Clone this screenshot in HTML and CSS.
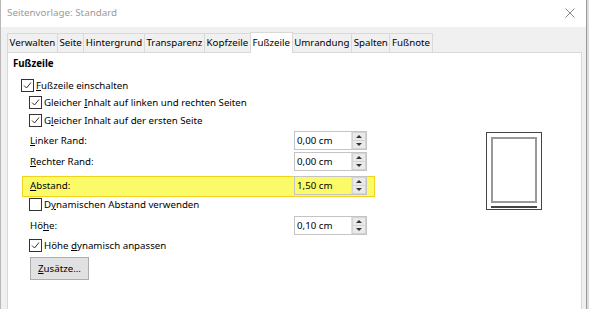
FILE: index.html
```html
<!DOCTYPE html>
<html lang="de">
<head>
<meta charset="utf-8">
<title>Seitenvorlage: Standard</title>
<link rel="stylesheet" href="styles.css">
</head>
<body>
<div class="window">
  <div class="titlebar">
    <span class="title">Seitenvorlage: Standard</span>
    <svg class="close" width="10" height="10" viewBox="0 0 10 10"><path d="M0.5 0.5 L9.5 9.5 M9.5 0.5 L0.5 9.5" stroke="#8a8a8a" stroke-width="1" fill="none"/></svg>
  </div>
  <div class="client">
    <div class="tabs">
      <div class="tab">Verwalten</div>
      <div class="tab">Seite</div>
      <div class="tab">Hintergrund</div>
      <div class="tab">Transparenz</div>
      <div class="tab">Kopfzeile</div>
      <div class="tab active">Fußzeile</div>
      <div class="tab">Umrandung</div>
      <div class="tab">Spalten</div>
      <div class="tab">Fußnote</div>
    </div>
    <div class="panel">
      <div class="form">
        <div class="heading">Fußzeile</div>
        <div class="row cb-row lvl1 first">
          <svg class="cb" width="13" height="13" viewBox="0 0 13 13"><rect x="0.5" y="0.5" width="12" height="12" fill="#fff" stroke="#333"/><path d="M3 6.5 L5.5 9 L10 3.5" stroke="#333" fill="none" stroke-width="1"/></svg>
          <span><u>F</u>ußzeile einschalten</span>
        </div>
        <div class="row cb-row lvl2 h17">
          <svg class="cb" width="13" height="13" viewBox="0 0 13 13"><rect x="0.5" y="0.5" width="12" height="12" fill="#fff" stroke="#333"/><path d="M3 6.5 L5.5 9 L10 3.5" stroke="#333" fill="none" stroke-width="1"/></svg>
          <span>Gleicher <u>I</u>nhalt auf linken und rechten Seiten</span>
        </div>
        <div class="row cb-row lvl2">
          <svg class="cb" width="13" height="13" viewBox="0 0 13 13"><rect x="0.5" y="0.5" width="12" height="12" fill="#fff" stroke="#333"/><path d="M3 6.5 L5.5 9 L10 3.5" stroke="#333" fill="none" stroke-width="1"/></svg>
          <span>G<u>l</u>eicher Inhalt auf der ersten Seite</span>
        </div>
        <div class="row field-row h22">
          <span class="label"><u>L</u>inker Rand:</span>
          <div class="spin"><span class="val">0,00 cm</span><div class="btns"><span class="up"></span><span class="down"></span></div></div>
        </div>
        <div class="row field-row h21">
          <span class="label"><u>R</u>echter Rand:</span>
          <div class="spin"><span class="val">0,00 cm</span><div class="btns"><span class="up"></span><span class="down"></span></div></div>
        </div>
        <div class="row field-row h22 highlight">
          <span class="label"><u>A</u>bstand:</span>
          <div class="spin"><span class="val">1,50 cm</span><div class="btns"><span class="up"></span><span class="down"></span></div></div>
        </div>
        <div class="row cb-row lvl2 h17">
          <svg class="cb" width="13" height="13" viewBox="0 0 13 13"><rect x="0.5" y="0.5" width="12" height="12" fill="#fff" stroke="#333"/></svg>
          <span>D<u>y</u>namischen Abstand verwenden</span>
        </div>
        <div class="row field-row h22 gap1">
          <span class="label">Hö<u>h</u>e:</span>
          <div class="spin"><span class="val">0,10 cm</span><div class="btns"><span class="up"></span><span class="down"></span></div></div>
        </div>
        <div class="row cb-row lvl2">
          <svg class="cb" width="13" height="13" viewBox="0 0 13 13"><rect x="0.5" y="0.5" width="12" height="12" fill="#fff" stroke="#333"/><path d="M3 6.5 L5.5 9 L10 3.5" stroke="#333" fill="none" stroke-width="1"/></svg>
          <span>Höhe <u>d</u>ynamisch anpassen</span>
        </div>
        <div class="btn-row"><button class="btn"><u>Z</u>usätze...</button></div>
      </div>
      <div class="preview">
        <div class="page">
          <div class="body-area"></div>
          <div class="footer-line"></div>
        </div>
      </div>
    </div>
  </div>
</div>
</body>
</html>
```

FILE: styles.css
```css
* { box-sizing: border-box; }
html, body { margin: 0; padding: 0; }
body {
  width: 589px;
  height: 309px;
  overflow: hidden;
  background: #dcdcdc;
  font-family: "Noto Sans", "Open Sans", sans-serif;
  font-size: 9.7px;
  color: #000;
}
.window {
  width: 587px;
  height: 309px;
  background: #f0f0f0;
  border-left: 1px solid #b8b8b8;
  border-right: 1px solid #9a9a9a;
  display: flex;
  flex-direction: column;
}
.titlebar {
  height: 27px;
  background: #fff;
  display: flex;
  align-items: center;
  justify-content: space-between;
  padding: 0 11px 2px 6px;
  flex: none;
}
.title { color: #9a9a9a; font-size: 9.8px; }
.close { display: block; }
.client {
  flex: 1;
  padding: 6px 4px 0 6px;
  display: flex;
  flex-direction: column;
}
.tabs {
  display: flex;
  height: 19px;
  align-items: flex-end;
  flex: none;
  position: relative;
  z-index: 1;
}
.tab {
  height: 19px;
  padding: 0 1.6px;
  border: 1px solid #d9d9d9;
  border-bottom: none;
  border-left: none;
  background: #f0f0f0;
  line-height: 18px;
  white-space: nowrap;
}
.tab:first-child { border-left: 1px solid #d9d9d9; }
.tab.active {
  height: 21px;
  margin-bottom: -1px;
  background: #fff;
  line-height: 19px;
  border-left: 1px solid #d9d9d9;
  margin-left: -1px;
}
.panel {
  flex: 1;
  background: #fff;
  border: 1px solid #d9d9d9;
  border-bottom: none;
  display: flex;
  padding: 0 0 0 5px;
}
.form {
  width: 367px;
  display: flex;
  flex-direction: column;
}
.heading {
  font-weight: bold;
  height: 19px;
  line-height: 19px;
  margin-top: 1px;
}
.row {
  display: flex;
  align-items: center;
  height: 18px;
  white-space: nowrap;
}
.row.first { margin-top: 3px; }
.row.h17 { height: 17px; }
.row.h21 { height: 21px; }
.row.h22 { height: 22px; }
.row.gap1 { margin-top: 1px; }
.lvl1 { padding-left: 8px; }
.lvl2 { padding-left: 16px; }
.cb { display: block; margin-right: 2px; flex: none; }
.field-row { padding-left: 17px; }
.label { width: 264px; flex: none; }
.highlight { position: relative; margin-top: 2px; }
.highlight::before {
  content: "";
  position: absolute;
  left: 9px;
  top: 2px;
  width: 351px;
  height: 19px;
  background: #fbfb6a;
  border: 1px solid #f3d21c;
  z-index: 0;
}
.highlight > * { position: relative; z-index: 1; }
.spin {
  width: 73px;
  height: 19px;
  border: 1px solid #c4c4c4;
  background: #fff;
  display: flex;
  align-items: center;
  padding-left: 2px;
}
.highlight .spin { background: #fbfb6a; }
.val { flex: 1; }
.btns {
  width: 15px;
  height: 17px;
  display: flex;
  flex-direction: column;
  border-left: 1px solid #e0e0e0;
}
.btns span {
  flex: 1;
  background: #eaeaea;
  position: relative;
  border: 1px solid #d4d4d4;
}
.btns span + span { border-top: none; }
.btns .up::after, .btns .down::after {
  content: "";
  position: absolute;
  left: 3px;
  width: 0;
  height: 0;
  border-left: 3px solid transparent;
  border-right: 3px solid transparent;
}
.btns .up::after { top: 2px; border-bottom: 3px solid #333; }
.btns .down::after { top: 2px; border-top: 3px solid #333; }
.btn-row { margin-top: 3px; padding-left: 17px; }
.btn {
  width: 59px;
  height: 23px;
  background: #e1e1e1;
  border: 1px solid #adadad;
  font-family: inherit;
  font-size: 9.7px;
  color: #000;
  padding: 0;
}
.preview {
  padding-left: 106px;
  padding-top: 79px;
}
.page {
  width: 56px;
  height: 78px;
  border: 1px solid #444;
  background: #fff;
  padding: 4px 4px 0 4px;
  display: flex;
  flex-direction: column;
}
.body-area {
  height: 66px;
  border: 2px solid #999;
}
.footer-line {
  margin-top: 3px;
  height: 2px;
  background: #444;
}
```
